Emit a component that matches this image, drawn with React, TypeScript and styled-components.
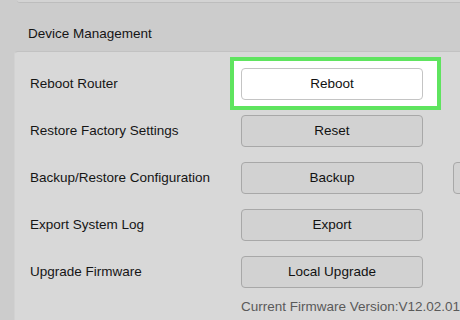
import styled, { createGlobalStyle } from "styled-components";

const GlobalStyle = createGlobalStyle`
  html, body {
    margin: 0;
    padding: 0;
    background: #cccccc;
    overflow: hidden;
  }
  body {
    font-family: "Liberation Sans", Arial, sans-serif;
    color: #1c1c1c;
  }
`;

type Action = {
  label: string;
  buttons: string[];
  active?: boolean;
};

const actions: Action[] = [
  { label: "Reboot Router", buttons: ["Reboot"], active: true },
  { label: "Restore Factory Settings", buttons: ["Reset"] },
  { label: "Backup/Restore Configuration", buttons: ["Backup", "Restore"] },
  { label: "Export System Log", buttons: ["Export"] },
  { label: "Upgrade Firmware", buttons: ["Local Upgrade"] },
];

function App() {
  return (
    <Page>
      <GlobalStyle />
      <TopCard />
      <SectionTitle>Device Management</SectionTitle>
      <Panel>
        {actions.map((action) => (
          <Row key={action.label}>
            <Label>{action.label}</Label>
            <Buttons>
              {action.buttons.map((text, i) => {
                // the second button sits past the right edge, only its border shows
                const button = (
                  <ActionButton
                    key={text}
                    $active={action.active}
                    aria-label={text}
                  >
                    {i === 0 ? text : ""}
                  </ActionButton>
                );
                return action.active ? (
                  <Highlight key={text}>{button}</Highlight>
                ) : (
                  button
                );
              })}
            </Buttons>
          </Row>
        ))}
        <Version>Current Firmware Version:V12.02.01</Version>
      </Panel>
    </Page>
  );
}

const Page = styled.div`
  width: 460px;
  height: 320px;
  overflow: hidden;
  display: flex;
  flex-direction: column;
`;

const TopCard = styled.div`
  margin-left: 17px;
  height: 2px;
  background: #d3d3d3;
  border-bottom: 1px solid #bdbdbd;
  border-bottom-left-radius: 3px;
`;

const SectionTitle = styled.div`
  height: 48px;
  padding: 20px 0 0 28px;
  box-sizing: border-box;
  font-size: 13.5px;
  line-height: 22px;
  color: #151515;
`;

const Panel = styled.div`
  flex: 1;
  margin-left: 14px;
  padding: 8px 0 0 15px;
  background: #d8d8d8;
  border-top: 1px solid #c2c2c2;
  border-left: 1px solid #d2d2d2;
  border-top-left-radius: 4px;
`;

const Row = styled.div`
  display: flex;
  align-items: center;
  height: 47px;
`;

const Label = styled.div`
  width: 211px;
  flex-shrink: 0;
  font-size: 13.5px;
  color: #151515;
`;

const Buttons = styled.div`
  display: flex;
  gap: 30px;
`;

const Highlight = styled.div`
  display: flex;
  flex-shrink: 0;
  margin: -11px -18px -10px -11px;
  padding: 7px 14px 6px 7px;
  border: 4px solid #5fe45f;
  background: #ffffff;
`;

const ActionButton = styled.button<{ $active?: boolean }>`
  width: 182px;
  height: 32px;
  flex-shrink: 0;
  border-radius: 4px;
  border: 1px solid ${(p) => (p.$active ? "#c4c4c4" : "#a8a8a8")};
  background: ${(p) => (p.$active ? "#ffffff" : "#d2d2d2")};
  font-family: "Liberation Sans", Arial, sans-serif;
  font-size: 13.5px;
  color: #111111;
  padding: 0;
`;

const Version = styled.div`
  margin: 4px 0 0 211px;
  font-size: 13.5px;
  color: #5a5a5a;
  white-space: nowrap;
`;

export default App;
